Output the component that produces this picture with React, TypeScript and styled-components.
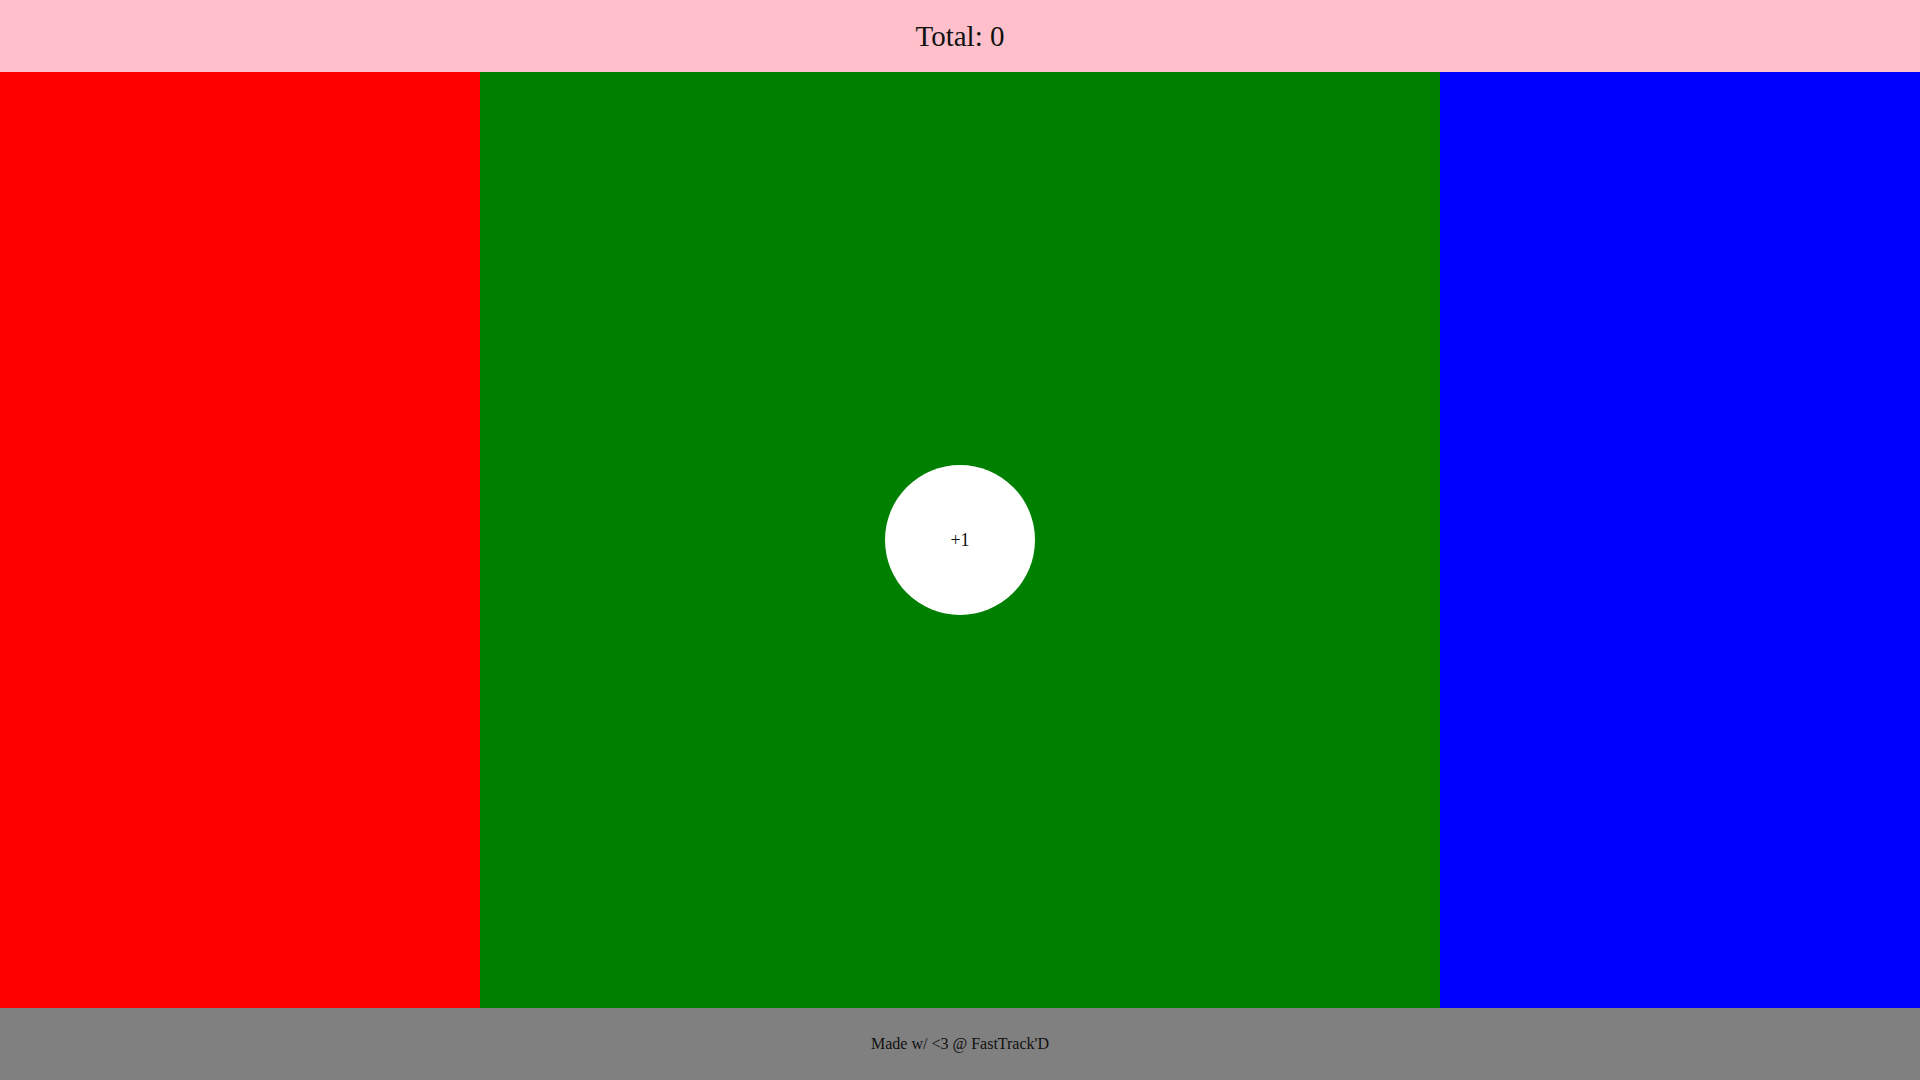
import React, { useState } from "react";
import styled, { createGlobalStyle } from "styled-components";

const GlobalStyle = createGlobalStyle`
  html, body { margin: 0; padding: 0; }
  body { font-family: "Liberation Serif", "Times New Roman", serif; color: #000; }
`;

const Page = styled.div`
  display: flex;
  flex-direction: column;
  height: 100vh;
`;

const Header = styled.header`
  height: 72px;
  flex: 0 0 72px;
  background: pink;
  display: flex;
  align-items: center;
  justify-content: center;
  font-size: 29px;
  color: #111;
`;

const Main = styled.main`
  flex: 1;
  display: grid;
  grid-template-columns: 1fr 2fr 1fr;
`;

const Column = styled.section<{ $bg: string }>`
  background: ${(p) => p.$bg};
  display: flex;
  align-items: center;
  justify-content: center;
`;

const CircleButton = styled.button`
  width: 150px;
  height: 150px;
  border-radius: 50%;
  border: none;
  background: #fff;
  font-family: "Liberation Serif", "Times New Roman", serif;
  font-size: 18px;
  color: #111;
  cursor: pointer;
  padding: 0;
`;

const Footer = styled.footer`
  height: 72px;
  flex: 0 0 72px;
  background: grey;
  display: flex;
  align-items: center;
  justify-content: center;
  font-size: 16px;
  color: #111;
`;

export default function App() {
  const [total, setTotal] = useState(0);
  return (
    <>
      <GlobalStyle />
      <Page>
        <Header>Total: {total}</Header>
        <Main>
          <Column $bg="red" />
          <Column $bg="green">
            <CircleButton onClick={() => setTotal((t) => t + 1)}>+1</CircleButton>
          </Column>
          <Column $bg="blue" />
        </Main>
        <Footer>Made w/ &lt;3 @ FastTrack'D</Footer>
      </Page>
    </>
  );
}
